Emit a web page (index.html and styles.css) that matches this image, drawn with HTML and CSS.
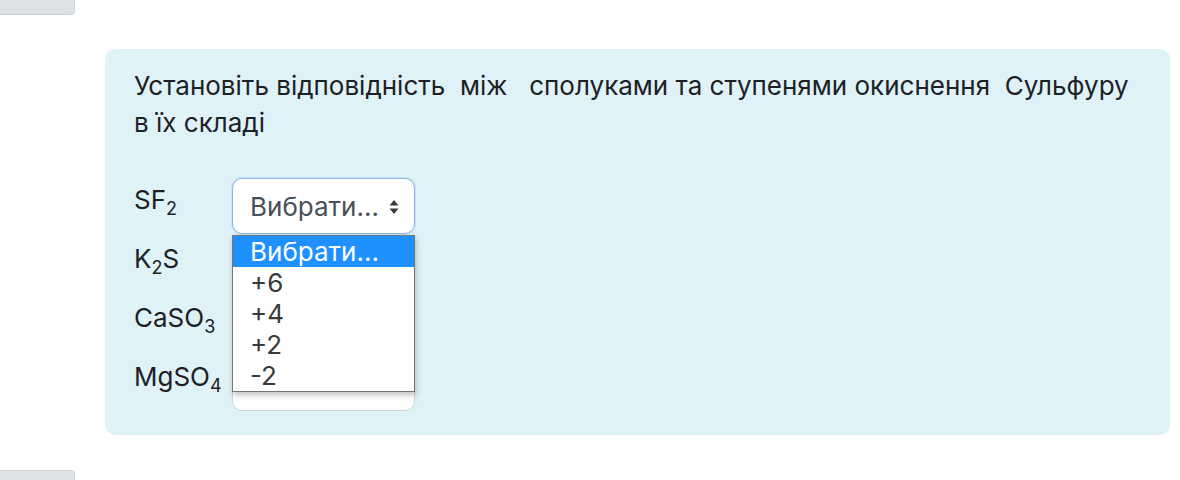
FILE: index.html
```html
<!DOCTYPE html>
<html lang="uk">
<head>
<meta charset="utf-8">
<link rel="stylesheet" href="styles.css">
</head>
<body>
<div class="nav-btn nav-btn-top"></div>
<div class="formulation">
  <p class="qtext">Установіть відповідність &nbsp;між &nbsp; сполуками та ступенями окиснення &nbsp;Сульфуру в їх складі</p>
  <div class="answers">
    <div class="row">
      <div class="lbl">SF<sub>2</sub></div>
      <div class="select-wrap">
        <div class="select focused"><span>Вибрати...</span><svg class="arrows" width="12" height="16" viewBox="0 0 12 16"><path d="M6 1 L10.5 6.5 H1.5 Z M6 15 L10.5 9.5 H1.5 Z" fill="#343a40"/></svg></div>
        <ul class="dropdown">
          <li class="hl">Вибрати...</li>
          <li>+6</li>
          <li>+4</li>
          <li>+2</li>
          <li>-2</li>
        </ul>
      </div>
    </div>
    <div class="row">
      <div class="lbl">K<sub>2</sub>S</div>
      <div class="select-wrap"><div class="select"></div></div>
    </div>
    <div class="row">
      <div class="lbl">CaSO<sub>3</sub></div>
      <div class="select-wrap"><div class="select"></div></div>
    </div>
    <div class="row">
      <div class="lbl">MgSO<sub>4</sub></div>
      <div class="select-wrap"><div class="select"><span class="tick"></span></div></div>
    </div>
  </div>
</div>
<div class="nav-btn nav-btn-bottom"></div>
</body>
</html>
```
FILE: styles.css
```css
html, body { margin: 0; padding: 0; background: #fff; }
body {
  font-family: "Inter", "DejaVu Sans", sans-serif;
  color: #1d2125;
  width: 1180px;
  height: 480px;
  overflow: hidden;
}
.nav-btn {
  width: 75px;
  background: #dee2e6;
  border: 1px solid #cfd3d8;
  border-left: none;
  box-sizing: border-box;
}
.nav-btn-top { height: 15px; border-top: none; border-bottom-right-radius: 4px; }
.nav-btn-bottom { height: 10px; margin-top: 35px; border-bottom: none; border-top-right-radius: 4px; }
.formulation {
  margin: 34px 0 0 105px;
  width: 1065px;
  height: 386px;
  box-sizing: border-box;
  padding: 18px 36px 24px 29px;
  background: #def2f8;
  border-radius: 10px;
}
.qtext {
  margin: 0;
  font-size: 26px;
  line-height: 37px;
}
.answers {
  margin-top: 37px;
  display: flex;
  flex-direction: column;
  gap: 3px;
}
.row { display: flex; height: 56px; font-size: 26px; }
.lbl { width: 98px; padding-top: 7px; line-height: 30px; }
.lbl sub { font-size: 18px; vertical-align: -6px; line-height: 0; }
.select-wrap { position: relative; }
.select {
  width: 183px;
  height: 56px;
  box-sizing: border-box;
  border: 1px solid #ced4da;
  border-radius: 10px;
  background: #fff;
  display: flex;
  align-items: center;
  padding-left: 17px;
  position: relative;
  color: #495057;
}
.select.focused { border-color: #8fb3e6; box-shadow: 0 0 0 1px rgba(143,179,230,0.25); }
.arrows { position: absolute; right: 14px; top: 20px; }
.tick { position: absolute; left: 70px; top: 0; width: 2px; height: 6px; background: #555; }
.dropdown {
  position: absolute;
  left: 0;
  top: 57px;
  z-index: 5;
  width: 183px;
  margin: 0;
  padding: 0;
  list-style: none;
  box-sizing: border-box;
  background: #fff;
  border: 1px solid #767676;
  box-shadow: 1px 3px 6px rgba(0,0,0,0.25);
  font-size: 26px;
}
.dropdown li { height: 31px; line-height: 31px; padding-left: 17px; color: #3a3a3a; }
.dropdown li.hl { background: #1e90ff; color: #fff; }
```
